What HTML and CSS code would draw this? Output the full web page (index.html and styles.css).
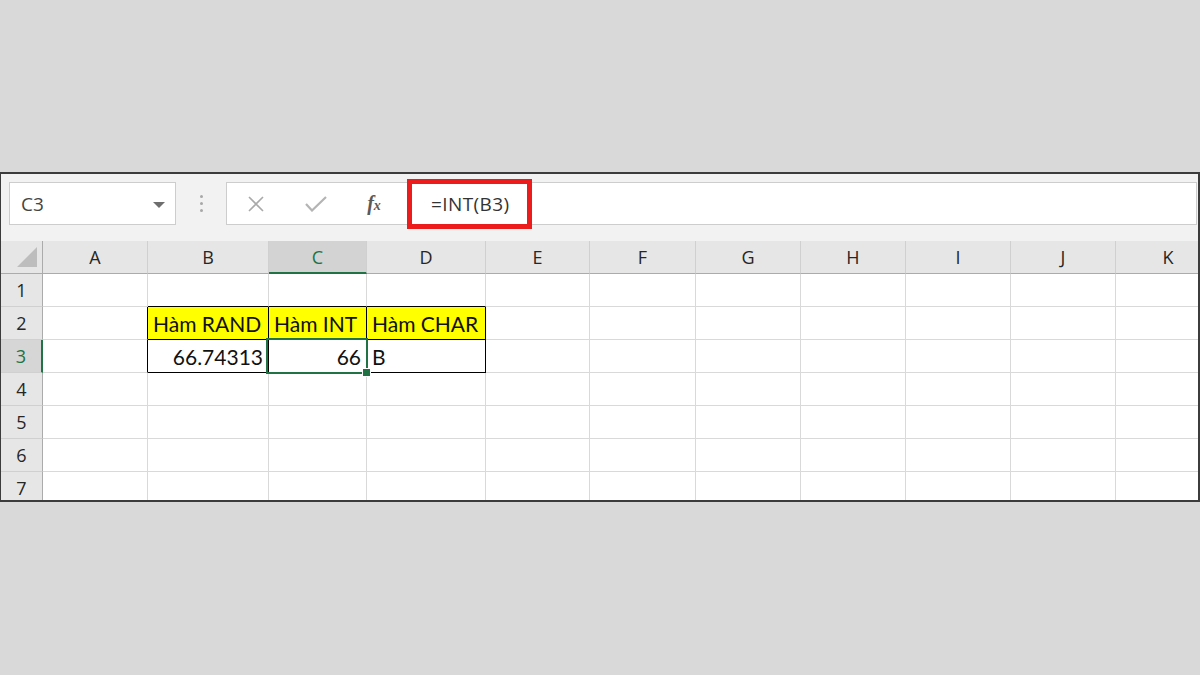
FILE: index.html
```html
<!DOCTYPE html>
<html lang="vi">
<head>
  <meta charset="UTF-8">
  <title>Hàm INT</title>
  <link rel="stylesheet" href="styles.css">
</head>
<body>

<div class="window">
  <!-- formula bar -->
  <div class="formula-bar">
    <div class="name-box">
      <span>C3</span>
      <span class="caret"></span>
    </div>
    <div class="grip"><i></i><i></i><i></i></div>
    <div class="formula-box">
      <span class="fb-icon cancel">
        <svg width="18" height="16" viewBox="0 0 18 16"><path d="M2 1 L16 15 M16 1 L2 15" stroke="#a9a9a9" stroke-width="1.6" fill="none"/></svg>
      </span>
      <span class="fb-icon enter">
        <svg width="22" height="16" viewBox="0 0 22 16"><path d="M1 8 L7 14.5 L21 1" stroke="#b4b4b4" stroke-width="2.2" fill="none"/></svg>
      </span>
      <span class="fb-icon fx">f<sub>x</sub></span>
      <span class="formula">=INT(B3)</span>
    </div>
  </div>

  <!-- sheet grid -->
  <div class="sheet">
    <div class="corner"><svg width="20" height="20" viewBox="0 0 20 20"><path d="M20 0 L20 20 L0 20 Z" fill="#bdbdbd"/></svg></div>
    <div class="col-head">A</div>
    <div class="col-head">B</div>
    <div class="col-head sel">C</div>
    <div class="col-head">D</div>
    <div class="col-head">E</div>
    <div class="col-head">F</div>
    <div class="col-head">G</div>
    <div class="col-head">H</div>
    <div class="col-head">I</div>
    <div class="col-head">J</div>
    <div class="col-head">K</div>

    <div class="row-head">1</div>
    <div class="cell"></div>
    <div class="cell bb"></div>
    <div class="cell bb"></div>
    <div class="cell bb"></div>
    <div class="cell"></div><div class="cell"></div><div class="cell"></div><div class="cell"></div><div class="cell"></div><div class="cell"></div><div class="cell"></div>

    <div class="row-head">2</div>
    <div class="cell br"></div>
    <div class="cell box yellow">Hàm RAND</div>
    <div class="cell box yellow">Hàm INT</div>
    <div class="cell box yellow">Hàm CHAR</div>
    <div class="cell"></div><div class="cell"></div><div class="cell"></div><div class="cell"></div><div class="cell"></div><div class="cell"></div><div class="cell"></div>

    <div class="row-head sel">3</div>
    <div class="cell br"></div>
    <div class="cell box num">66.74313</div>
    <div class="cell box num active">66</div>
    <div class="cell box">B</div>
    <div class="cell"></div><div class="cell"></div><div class="cell"></div><div class="cell"></div><div class="cell"></div><div class="cell"></div><div class="cell"></div>

    <div class="row-head">4</div>
    <div class="cell"></div><div class="cell"></div><div class="cell"></div><div class="cell"></div><div class="cell"></div><div class="cell"></div><div class="cell"></div><div class="cell"></div><div class="cell"></div><div class="cell"></div><div class="cell"></div>

    <div class="row-head">5</div>
    <div class="cell"></div><div class="cell"></div><div class="cell"></div><div class="cell"></div><div class="cell"></div><div class="cell"></div><div class="cell"></div><div class="cell"></div><div class="cell"></div><div class="cell"></div><div class="cell"></div>

    <div class="row-head">6</div>
    <div class="cell"></div><div class="cell"></div><div class="cell"></div><div class="cell"></div><div class="cell"></div><div class="cell"></div><div class="cell"></div><div class="cell"></div><div class="cell"></div><div class="cell"></div><div class="cell"></div>

    <div class="row-head">7</div>
    <div class="cell"></div><div class="cell"></div><div class="cell"></div><div class="cell"></div><div class="cell"></div><div class="cell"></div><div class="cell"></div><div class="cell"></div><div class="cell"></div><div class="cell"></div><div class="cell"></div>
  </div>
</div>

</body>
</html>
```

FILE: styles.css
```css
* {
  box-sizing: border-box;
}
body {
  margin: 0;
  background-color: #d9d9d9;
  font-family: "Open Sans", Arial, sans-serif;
}
.window {
  margin-top: 172px;
  width: 1200px;
  height: 330px;
  border-top: 2px solid #3c3c3c;
  border-left: 1px solid #3c3c3c;
  border-right: 2px solid #3c3c3c;
  border-bottom: 2px solid #3c3c3c;
  background: #f2f2f2;
  overflow: hidden;
}

/* formula bar */
.formula-bar {
  height: 67px;
  padding-top: 8px;
  padding-left: 8px;
  display: flex;
  align-items: flex-start;
}
.name-box {
  width: 167px;
  height: 43px;
  background: #fff;
  border: 1px solid #cdcdcd;
  display: flex;
  align-items: center;
  justify-content: space-between;
  padding: 0 10px 0 11px;
  font-size: 19px;
  color: #444;
}
.caret {
  width: 0;
  height: 0;
  border-left: 6px solid transparent;
  border-right: 6px solid transparent;
  border-top: 6px solid #6e6e6e;
  margin-top: 2px;
}
.grip {
  width: 50px;
  height: 43px;
  display: flex;
  flex-direction: column;
  align-items: center;
  justify-content: center;
  gap: 4px;
}
.grip i {
  display: block;
  width: 3px;
  height: 3px;
  border-radius: 50%;
  background: #a8a8a8;
}
.formula-box {
  flex: 1;
  height: 43px;
  margin-right: 1px;
  background: #fff;
  border: 1px solid #cdcdcd;
  display: flex;
  align-items: center;
  padding-left: 20px;
}
.fb-icon {
  display: flex;
  justify-content: center;
  align-items: center;
}
.cancel {
  width: 18px;
}
.enter {
  width: 22px;
  margin-left: 40px;
}
.fx {
  width: 20px;
  margin-left: 37px;
  font-family: "Liberation Serif", "DejaVu Serif", serif;
  font-style: italic;
  font-weight: bold;
  font-size: 20px;
  color: #5a5a5a;
}
.fx sub {
  font-size: 14px;
  vertical-align: baseline;
  position: relative;
  top: 2px;
}
.formula {
  height: 50px;
  width: 125px;
  margin-left: 23px;
  border: 5px solid #ec1c1c;
  display: flex;
  align-items: center;
  padding-left: 19px;
  font-size: 19px;
  letter-spacing: 0.4px;
  color: #333;
}

/* grid */
.sheet {
  display: grid;
  grid-template-columns: 42px 105px 121px 98px 119px 104px 106px 105px 105px 105px 105px 105px;
  grid-template-rows: 33px repeat(7, 33px);
  background: #fff;
  width: 1220px;
}
.corner {
  background: #e6e6e6;
  border-right: 1px solid #ababab;
  border-bottom: 1px solid #ababab;
  display: flex;
  align-items: flex-end;
  padding: 0 0 6px 16px;
}
.col-head {
  background: #e6e6e6;
  border-right: 1px solid #d0d0d0;
  border-bottom: 1px solid #ababab;
  display: flex;
  align-items: center;
  justify-content: center;
  font-size: 18px;
  color: #262626;
}
.col-head.sel {
  background: #d3d3d3;
  color: #217346;
  border-bottom: 2px solid #217346;
}
.row-head {
  background: #e6e6e6;
  border-right: 1px solid #ababab;
  border-bottom: 1px solid #d0d0d0;
  display: flex;
  align-items: center;
  justify-content: center;
  font-size: 18px;
  color: #262626;
}
.row-head.sel {
  background: #d6d6d6;
  color: #217346;
  border-right: 2px solid #217346;
}
.cell {
  border-right: 1px solid #d9d9d9;
  border-bottom: 1px solid #d9d9d9;
  font-family: Lato, "Open Sans", sans-serif;
  font-size: 21px;
  color: #111;
  display: flex;
  align-items: center;
  padding: 0 5px;
  white-space: nowrap;
}
.cell.bb {
  border-bottom-color: #000;
}
.cell.br {
  border-right-color: #000;
}
.cell.box {
  border-right-color: #000;
  border-bottom-color: #000;
}
.yellow {
  background: #ffff00;
}
.num {
  justify-content: flex-end;
}
.active {
  position: relative;
}
.active::after {
  content: "";
  position: absolute;
  top: -2px;
  left: -3px;
  right: -2px;
  bottom: -2px;
  border: 2px solid #217346;
}
.active::before {
  content: "";
  position: absolute;
  right: -5px;
  bottom: -5px;
  width: 7px;
  height: 7px;
  background: #217346;
  border: 1px solid #fff;
  z-index: 1;
}
```
